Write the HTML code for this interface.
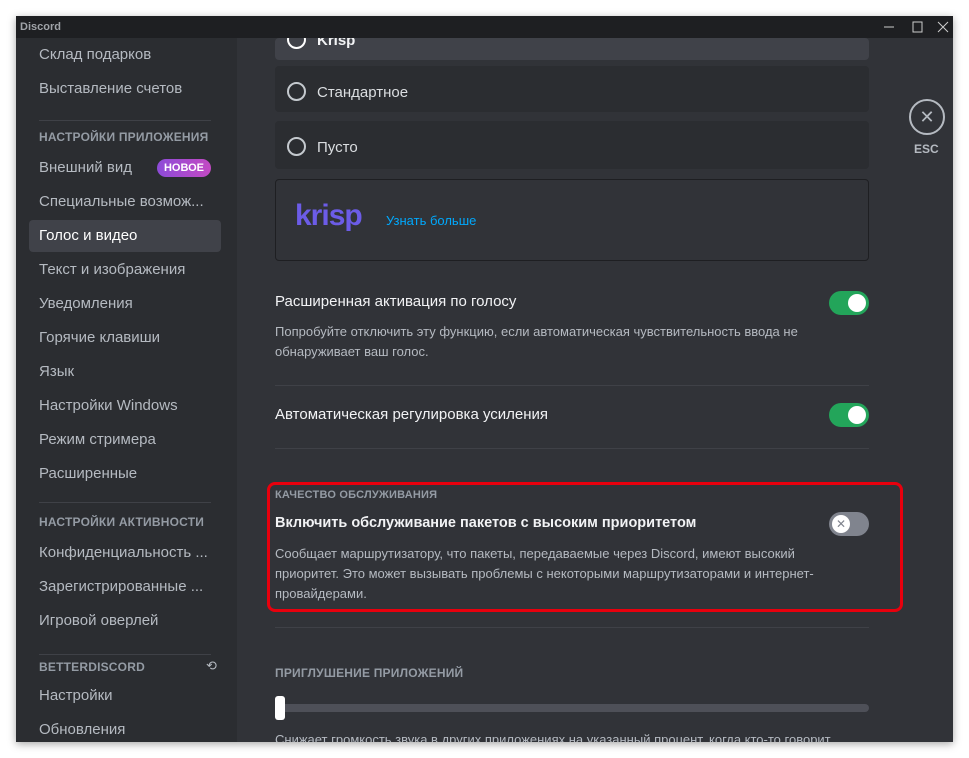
<!DOCTYPE html>
<html><head><meta charset="utf-8"><style>
*{margin:0;padding:0;box-sizing:border-box}
body{width:969px;height:758px;background:#fff;position:relative;overflow:hidden;font-family:"Liberation Sans","DejaVu Sans",sans-serif}
.win{position:absolute;left:16px;top:16px;width:937px;height:726px;background:#313338;overflow:hidden;box-shadow:0 2px 8px rgba(0,0,0,.35)}
.tb{position:absolute;left:0;top:0;width:937px;height:22px;background:#1e1f22;z-index:5}
.tb .t{position:absolute;left:4px;top:5px;font-size:11px;font-weight:bold;color:#a0a3a8}
.side{position:absolute;left:0;top:22px;width:221px;height:704px;background:#2b2d31}
.a{position:absolute;font-size:15px;color:#b5bac1;white-space:nowrap}
.abs{position:absolute}
.h{position:absolute;font-size:12px;font-weight:bold;color:#949ba4;letter-spacing:.2px}
.div{position:absolute;height:1px;background:#3f4147}
.tx{position:absolute;color:#f2f3f5;font-size:15px;white-space:nowrap}
.d{position:absolute;color:#b5bac1;font-size:13px;line-height:20px}
.row{position:absolute;left:259px;width:594px;background:#2b2d31;border-radius:4px}
.rad{position:absolute;width:19px;height:19px;border:2px solid #c4c9ce;border-radius:50%}
.tg{position:absolute;width:40px;height:24px;border-radius:12px;background:#23a55a}
.tg i{position:absolute;right:3px;top:3px;width:18px;height:18px;border-radius:50%;background:#fff}
</style></head><body>
<div class="win">
<div class="tb"><span class="t">Discord</span>
<svg class="abs" style="left:866px;top:5px" width="70" height="12"><path d="M2 6h10" stroke="#ccc"/><path d="M31 1h9v10h-9z" fill="none" stroke="#ccc"/><path d="M56 1l10 10M66 1L56 11" stroke="#ccc"/></svg></div>
<div class="side">
<div class="a" style="left:23px;top:8px">Склад подарков</div>
<div class="a" style="left:23px;top:42px">Выставление счетов</div>
<div class="div" style="left:23px;top:82px;width:172px"></div>
<div class="h" style="left:23px;top:92px">НАСТРОЙКИ ПРИЛОЖЕНИЯ</div>
<div class="a" style="left:23px;top:121px">Внешний вид</div>
<div class="abs" style="left:141px;top:121px;width:54px;height:18px;border-radius:9px;background:linear-gradient(90deg,#8d4bd8,#c34ac3);color:#fff;font-size:11px;font-weight:bold;text-align:center;line-height:18px">НОВОЕ</div>
<div class="a" style="left:23px;top:155px">Специальные возмож...</div>
<div class="abs" style="left:13px;top:182px;width:192px;height:32px;background:#404249;border-radius:4px"></div>
<div class="a" style="left:23px;top:189px;color:#fff">Голос и видео</div>
<div class="a" style="left:23px;top:223px">Текст и изображения</div>
<div class="a" style="left:23px;top:257px">Уведомления</div>
<div class="a" style="left:23px;top:291px">Горячие клавиши</div>
<div class="a" style="left:23px;top:325px">Язык</div>
<div class="a" style="left:23px;top:359px">Настройки Windows</div>
<div class="a" style="left:23px;top:393px">Режим стримера</div>
<div class="a" style="left:23px;top:427px">Расширенные</div>
<div class="div" style="left:23px;top:464px;width:172px"></div>
<div class="h" style="left:23px;top:477px">НАСТРОЙКИ АКТИВНОСТИ</div>
<div class="a" style="left:23px;top:506px">Конфиденциальность ...</div>
<div class="a" style="left:23px;top:540px">Зарегистрированные ...</div>
<div class="a" style="left:23px;top:574px">Игровой оверлей</div>
<div class="div" style="left:23px;top:616px;width:172px"></div>
<div class="h" style="left:23px;top:622px">BETTERDISCORD</div>
<div class="abs" style="left:190px;top:620px;color:#b5bac1;font-size:13px">⟲</div>
<div class="a" style="left:23px;top:649px">Настройки</div>
<div class="a" style="left:23px;top:683px">Обновления</div>
</div>
<div class="row" style="top:22px;height:22px;background:#404249"></div>
<div class="rad" style="left:271px;top:14px;border-color:#fff"></div>
<div class="tx" style="left:301px;top:16px;font-weight:bold">Krisp</div>
<div class="row" style="top:50px;height:46px"></div>
<div class="rad" style="left:271px;top:66px"></div>
<div class="tx" style="left:301px;top:68px;color:#dbdee1">Стандартное</div>
<div class="row" style="top:105px;height:48px"></div>
<div class="rad" style="left:271px;top:121px"></div>
<div class="tx" style="left:301px;top:123px;color:#dbdee1">Пусто</div>
<div class="abs" style="left:259px;top:163px;width:594px;height:82px;border:1px solid #1e1f22;border-radius:4px"></div>
<div class="abs" style="left:279px;top:183px;color:#6c5ce7;font-size:30px;font-weight:bold;letter-spacing:-1px">krisp</div>
<div class="abs" style="left:370px;top:197px;color:#00a8fc;font-size:13px">Узнать больше</div>
<div class="tx" style="left:259px;top:277px">Расширенная активация по голосу</div>
<div class="tg" style="left:813px;top:275px"><i></i></div>
<div class="d" style="left:259px;top:306px;width:560px">Попробуйте отключить эту функцию, если автоматическая чувствительность ввода не обнаруживает ваш голос.</div>
<div class="div" style="left:259px;top:369px;width:594px"></div>
<div class="tx" style="left:259px;top:390px">Автоматическая регулировка усиления</div>
<div class="tg" style="left:813px;top:387px"><i></i></div>
<div class="div" style="left:259px;top:432px;width:594px"></div>
<div class="abs" style="left:251px;top:466px;width:636px;height:130px;border:3px solid #e8000d;border-radius:8px"></div>
<div class="h" style="left:259px;top:473px;font-size:11px">КАЧЕСТВО ОБСЛУЖИВАНИЯ</div>
<div class="tx" style="left:259px;top:499px;font-weight:bold;font-size:14.5px">Включить обслуживание пакетов с высоким приоритетом</div>
<div class="tg" style="left:813px;top:496px;background:#80848e"><i style="left:3px;right:auto;color:#80848e;font-style:normal;font-size:12px;font-weight:bold;text-align:center;line-height:18px">✕</i></div>
<div class="d" style="left:259px;top:528px;width:560px">Сообщает маршрутизатору, что пакеты, передаваемые через Discord, имеют высокий приоритет. Это может вызывать проблемы с некоторыми маршрутизаторами и интернет-провайдерами.</div>
<div class="div" style="left:259px;top:611px;width:594px"></div>
<div class="h" style="left:259px;top:650px">ПРИГЛУШЕНИЕ ПРИЛОЖЕНИЙ</div>
<div class="abs" style="left:259px;top:688px;width:594px;height:8px;border-radius:4px;background:#4e5058"></div>
<div class="abs" style="left:259px;top:680px;width:10px;height:24px;border-radius:3px;background:#fff"></div>
<div class="d" style="left:259px;top:714px;width:600px;white-space:nowrap">Снижает громкость звука в других приложениях на указанный процент, когда кто-то говорит</div>
<div class="abs" style="left:893px;top:83px;width:36px;height:36px;border:2px solid #b5bac1;border-radius:50%;color:#b5bac1;text-align:center;line-height:32px;font-size:18px">✕</div>
<div class="abs" style="left:898px;top:126px;color:#b5bac1;font-size:12px;font-weight:bold">ESC</div>
</div>
</body></html>
